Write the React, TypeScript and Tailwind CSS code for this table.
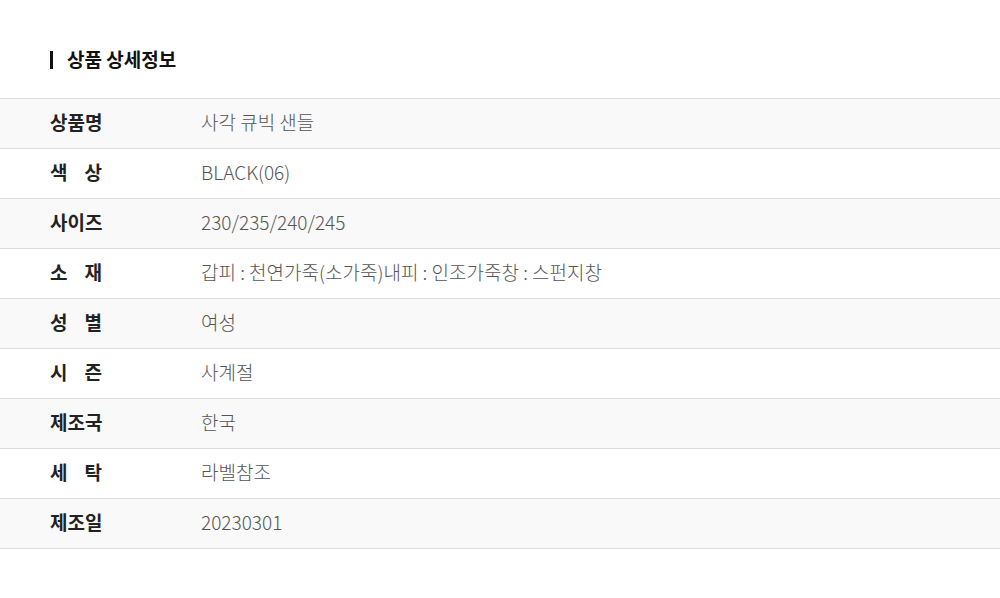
import React from "react";

const rows: [string, string][] = [
  ["상품명", "사각 큐빅 샌들"],
  ["색상", "BLACK(06)"],
  ["사이즈", "230/235/240/245"],
  ["소재", "갑피 : 천연가죽(소가죽)내피 : 인조가죽창 : 스펀지창"],
  ["성별", "여성"],
  ["시즌", "사계절"],
  ["제조국", "한국"],
  ["세탁", "라벨참조"],
  ["제조일", "20230301"],
];

export default function App() {
  return (
    <div
      className="w-[1000px] h-[598px] bg-white pt-[49px]"
      style={{ fontFamily: '"Noto Sans CJK KR", "Noto Sans", sans-serif' }}
    >
      <div className="flex items-center h-[22px] pl-[50px] mb-[27px]">
        <span className="w-[3px] h-[18px] bg-[#111]" />
        <span className="ml-[14px] text-[19px] leading-[22px] font-bold text-[#111] -mt-[2px]">상품 상세정보</span>
      </div>
      <div className="border-t border-[#dcdcdc]">
        {rows.map(([k, v], i) => (
          <div
            key={k}
            className={`flex items-center h-[50px] border-b border-[#dcdcdc] ${i % 2 === 0 ? "bg-[#f9f9f9]" : "bg-white"}`}
          >
            <div className="w-[201px] pl-[50px] shrink-0 -mt-[3px]">
              {k.length === 2 ? (
                <div className="w-[52px] flex justify-between text-[19px] font-bold text-[#222]">
                  <span>{k[0]}</span>
                  <span>{k[1]}</span>
                </div>
              ) : (
                <div className="text-[19px] font-bold text-[#222]">{k}</div>
              )}
            </div>
            <div className="text-[19px] font-light text-[#555] -mt-[3px]">{v}</div>
          </div>
        ))}
      </div>
    </div>
  );
}
